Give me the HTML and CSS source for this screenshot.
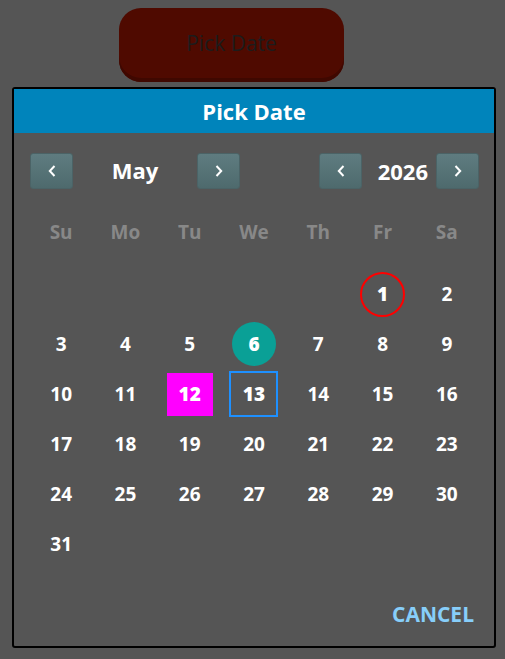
FILE: index.html
```html
<!DOCTYPE html>
<html lang="en">
<head>
    <meta charset="UTF-8">
    <meta name="viewport" content="width=device-width, initial-scale=1.0">
    <title>Pick Date</title>
    <link rel="stylesheet" href="styles.css">
</head>
<body>

    <button class="open-btn">Pick Date</button>

    <div class="dialog">
        <div class="dialog-title">Pick Date</div>

        <div class="nav">
            <div class="nav-group">
                <button class="nav-btn"><svg width="8" height="12" viewBox="0 0 8 12"><polyline points="6.5,1 1.8,6 6.5,11" /></svg></button>
                <span class="nav-label month">May</span>
                <button class="nav-btn"><svg width="8" height="12" viewBox="0 0 8 12"><polyline points="1.5,1 6.2,6 1.5,11" /></svg></button>
            </div>
            <div class="nav-group">
                <button class="nav-btn"><svg width="8" height="12" viewBox="0 0 8 12"><polyline points="6.5,1 1.8,6 6.5,11" /></svg></button>
                <span class="nav-label year">2026</span>
                <button class="nav-btn"><svg width="8" height="12" viewBox="0 0 8 12"><polyline points="1.5,1 6.2,6 1.5,11" /></svg></button>
            </div>
        </div>

        <div class="weekdays">
            <span>Su</span><span>Mo</span><span>Tu</span><span>We</span><span>Th</span><span>Fr</span><span>Sa</span>
        </div>

        <div class="days">
            <span></span><span></span><span></span><span></span><span></span>
            <span><b class="ring">1</b></span><span>2</span>
            <span>3</span><span>4</span><span>5</span><span><b class="today">6</b></span><span>7</span><span>8</span><span>9</span>
            <span>10</span><span>11</span><span><b class="picked">12</b></span><span><b class="focus">13</b></span><span>14</span><span>15</span><span>16</span>
            <span>17</span><span>18</span><span>19</span><span>20</span><span>21</span><span>22</span><span>23</span>
            <span>24</span><span>25</span><span>26</span><span>27</span><span>28</span><span>29</span><span>30</span>
            <span>31</span>
        </div>

        <div class="actions">
            <button class="cancel">CANCEL</button>
        </div>
    </div>

</body>
</html>
```

FILE: styles.css
```css
body, html {
    margin: 0;
    padding: 0;
    background-color: #555555;
    font-family: "Open Sans", "Noto Sans", sans-serif;
}

body {
    padding-top: 8px;
}

.open-btn {
    display: block;
    margin-left: 119px;
    width: 225px;
    height: 74px;
    border: none;
    border-radius: 22px;
    background-color: #4f0a00;
    box-shadow: inset 0 -4px 0 #3f0800;
    color: #1c1c1c;
    font-family: inherit;
    font-size: 21px;
    padding: 0 0 4px;
}

.dialog {
    box-sizing: border-box;
    margin: 5px 0 0 12px;
    width: 484px;
    height: 561px;
    border: 2px solid #000;
    border-radius: 3px;
    background-color: #555555;
    display: flex;
    flex-direction: column;
}

.dialog-title {
    height: 44px;
    line-height: 44px;
    background-color: #0084bb;
    color: #fff;
    text-align: center;
    font-weight: bold;
    font-size: 22px;
}

.nav {
    display: flex;
    justify-content: space-between;
    padding: 20px 15px 0 16px;
}

.nav-group {
    display: flex;
    align-items: center;
}

.nav-btn {
    width: 43px;
    height: 36px;
    padding: 0;
    border: 1px solid #4b6366;
    border-radius: 3px;
    background: linear-gradient(#5f7c80, #4e6a6d);
    display: flex;
    align-items: center;
    justify-content: center;
}

.nav-btn polyline {
    fill: none;
    stroke: #fff;
    stroke-width: 2;
}

.nav-label {
    color: #fff;
    font-weight: bold;
    font-size: 22px;
    text-align: center;
}

.month {
    width: 124px;
    padding-bottom: 3px;
}

.year {
    width: 74px;
    padding-right: 8px;
    box-sizing: border-box;
    text-align: right;
}

.weekdays, .days {
    display: grid;
    grid-template-columns: repeat(7, 1fr);
    margin: 0 15px;
    text-align: center;
}

.weekdays {
    margin-top: 18px;
    height: 50px;
    line-height: 50px;
    color: #888888;
    font-weight: bold;
    font-size: 19px;
}

.days {
    margin-top: 12px;
    grid-auto-rows: 50px;
    color: #fff;
    font-weight: bold;
    font-size: 19px;
}

.days span {
    display: flex;
    align-items: center;
    justify-content: center;
}

.days b {
    display: flex;
    align-items: center;
    justify-content: center;
    box-sizing: border-box;
}

.ring {
    width: 45px;
    height: 45px;
    border: 2px solid #ff0000;
    border-radius: 50%;
}

.today {
    width: 44px;
    height: 44px;
    border-radius: 50%;
    background-color: #0aa096;
}

.picked {
    width: 46px;
    height: 43px;
    background-color: #ff00ff;
}

.focus {
    width: 49px;
    height: 46px;
    border: 2px solid #1e90ff;
}

.actions {
    margin-top: auto;
    display: flex;
    justify-content: flex-end;
    padding: 0 20px 18px 0;
}

.cancel {
    border: none;
    background: none;
    padding: 0;
    color: #87cefa;
    font-family: inherit;
    font-weight: bold;
    font-size: 21px;
}
```
